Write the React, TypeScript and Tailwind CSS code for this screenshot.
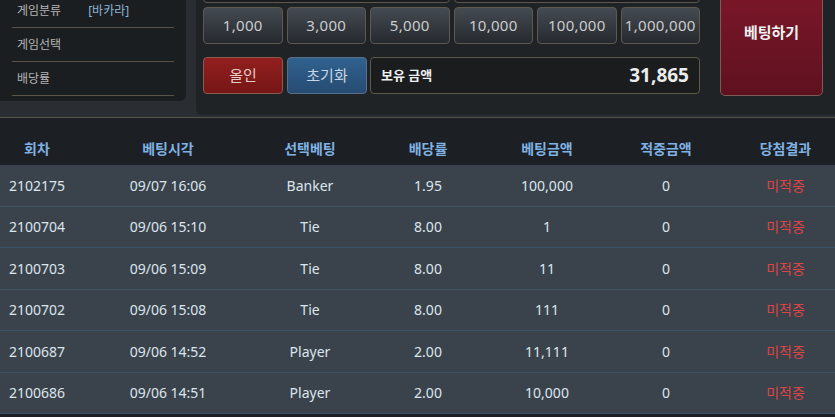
import React from "react";

const rows = [
  ["2102175", "09/07 16:06", "Banker", "1.95", "100,000", "0", "미적중"],
  ["2100704", "09/06 15:10", "Tie", "8.00", "1", "0", "미적중"],
  ["2100703", "09/06 15:09", "Tie", "8.00", "11", "0", "미적중"],
  ["2100702", "09/06 15:08", "Tie", "8.00", "111", "0", "미적중"],
  ["2100687", "09/06 14:52", "Player", "2.00", "11,111", "0", "미적중"],
  ["2100686", "09/06 14:51", "Player", "2.00", "10,000", "0", "미적중"],
];

const headers = ["회차", "베팅시각", "선택베팅", "배당률", "베팅금액", "적중금액", "당첨결과"];

const chips = ["1,000", "3,000", "5,000", "10,000", "100,000", "1,000,000"];

export default function App() {
  return (
    <div
      className="w-[835px] h-[417px] overflow-hidden bg-[#1c1f23] flex flex-col"
      style={{ fontFamily: '"Noto Sans", "Noto Sans CJK KR", sans-serif' }}
    >
      {/* top area */}
      <div className="flex h-[117px] shrink-0 bg-[#2a2d31] overflow-hidden">
        {/* left panel */}
        <div className="w-[186px] h-[107px] bg-[#1b1e21] rounded-br-[6px] px-[12px] flex flex-col -mt-[6px]">
          <div className="h-[34px] shrink-0 flex items-center border-b border-[#5b5346] pl-[5px] text-[12px] text-[#b4b4b4]">
            <span>게임분류</span>
            <span className="ml-[27px] text-[#8db6d6]">[바카라]</span>
          </div>
          <div className="h-[34px] shrink-0 flex items-center border-b border-[#5b5346] pl-[5px] text-[12px] text-[#b4b4b4]">
            게임선택
          </div>
          <div className="h-[34px] shrink-0 flex items-center border-b border-[#5b5346] pl-[5px] text-[12px] text-[#b4b4b4]">
            배당률
          </div>
        </div>
        {/* right panel */}
        <div className="ml-[10px] flex-1 h-[115px] bg-[#202326] rounded-bl-[6px] pl-[7px] flex gap-[20px] overflow-hidden">
          <div className="w-[497px] flex flex-col -mt-[27px] shrink-0">
            <div className="h-[30px] flex gap-[4px] shrink-0">
              <div className="flex-1 rounded-[4px] border border-[#5e584c] bg-[#1a1c1f]" />
              <div className="flex-1 rounded-[4px] border border-[#5e584c] bg-[#1a1c1f]" />
            </div>
            <div className="h-[37px] mt-[4px] flex gap-[4px] shrink-0">
              {chips.map((c) => (
                <div
                  key={c}
                  className="flex-1 rounded-[4px] border border-[#5f5a50] bg-gradient-to-b from-[#454b52] to-[#262a2f] flex items-center justify-center text-[15px] tracking-[0.3px] text-[#cacbcc]"
                >
                  {c}
                </div>
              ))}
            </div>
            <div className="h-[37px] mt-[13px] flex gap-[4px] shrink-0">
              <div className="w-[80px] rounded-[4px] border border-[#8a5a4c] bg-gradient-to-b from-[#931f1f] to-[#761616] flex items-center justify-center text-[15px] text-[#e6cfc8]">
                올인
              </div>
              <div className="w-[80px] rounded-[4px] border border-[#56708a] bg-gradient-to-b from-[#30628f] to-[#264b72] flex items-center justify-center text-[15px] text-[#c8d5e2]">
                초기화
              </div>
              <div className="flex-1 ml-[-1px] rounded-[4px] border border-[#5e5849] bg-[#1a1c1e] flex items-center justify-between pl-[10px] pr-[10px]">
                <span className="text-[13px] font-bold text-[#f0f0f0]">보유 금액</span>
                <span className="text-[19px] font-bold text-[#ececec]">31,865</span>
              </div>
            </div>
          </div>
          <div className="w-[103px] h-[123px] -mt-[27px] shrink-0 rounded-[5px] border border-[#7c5a55] bg-gradient-to-b from-[#80182a] to-[#5f1120] flex items-center justify-center">
            <span className="text-[15px] font-bold text-[#f2f2f2] mt-[-5px]">베팅하기</span>
          </div>
        </div>
      </div>
      {/* separator line */}
      <div className="h-[1px] bg-[#57534b] shrink-0" />
      {/* table header */}
      <div className="h-[47px] shrink-0 bg-[#1c1f23] pt-[14px] grid grid-cols-[74px_188px_96px_140px_98px_140px_99px] items-center text-[14px] font-bold text-[#7fb2e2]">
        {headers.map((h) => (
          <div key={h} className="text-center">
            {h}
          </div>
        ))}
      </div>
      {/* rows */}
      <div className="flex flex-col bg-[#3a434c]">
        {rows.map((r) => (
          <div
            key={r[0]}
            className="h-[41.5px] shrink-0 grid grid-cols-[74px_188px_96px_140px_98px_140px_99px] items-center border-b border-[#3a5466] text-[14px] text-[#dde5ec]"
          >
            {r.map((c, i) => (
              <div key={i} className={i === 6 ? "text-center text-[#dc4545]" : "text-center"}>
                {c}
              </div>
            ))}
          </div>
        ))}
      </div>
    </div>
  );
}
